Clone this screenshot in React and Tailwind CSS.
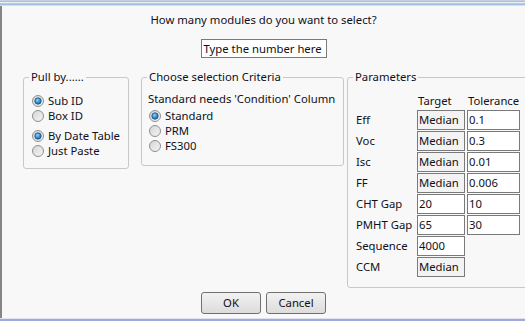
import React from 'react';

function Radio({ checked }) {
  return (
    <svg width="12" height="12" viewBox="0 0 12 12" className="shrink-0">
      <defs>
        <linearGradient id="rbg" x1="0" y1="0" x2="1" y2="1">
          <stop offset="0" stopColor="#d4d4d4" />
          <stop offset="1" stopColor="#f6f6f6" />
        </linearGradient>
        <radialGradient id="rdot" cx="0.4" cy="0.35" r="0.7">
          <stop offset="0" stopColor="#8fd3f7" />
          <stop offset="0.6" stopColor="#2b8ed0" />
          <stop offset="1" stopColor="#105d9c" />
        </radialGradient>
      </defs>
      <circle cx="6" cy="6" r="5.5" fill="url(#rbg)" stroke="#8e8f8f" strokeWidth="1" />
      {checked && <circle cx="6" cy="6" r="3.2" fill="url(#rdot)" stroke="#1f4f82" strokeWidth="0.8" />}
    </svg>
  );
}

function RadioRow({ label, checked, className = '' }) {
  return (
    <div className={`flex items-center h-[15px] ${className}`}>
      <Radio checked={checked} />
      <span className="ml-[4px] leading-[15px] whitespace-nowrap">{label}</span>
    </div>
  );
}

function Group({ title, className, children }) {
  return (
    <div className={`relative shrink-0 border border-[#c8c8c8] rounded-[3px] ${className}`}>
      <span className="absolute -top-[9px] left-[5px] px-[2px] leading-[16px] bg-[#f8f8f8] whitespace-nowrap">
        {title}
      </span>
      {children}
    </div>
  );
}

function Field({ value, readOnly }) {
  return (
    <div
      className={`h-[20px] border border-[#7a7a7a] pl-[1px] leading-[18px] ${readOnly ? 'bg-[#f3f3f3]' : 'bg-white'}`}
    >
      {value}
    </div>
  );
}

const params = [
  ['Eff', 'Median', '0.1'],
  ['Voc', 'Median', '0.3'],
  ['Isc', 'Median', '0.01'],
  ['FF', 'Median', '0.006'],
  ['CHT Gap', '20', '10'],
  ['PMHT Gap', '65', '30'],
  ['Sequence', '4000', null],
  ['CCM', 'Median', null],
];

export default function App() {
  return (
    <div
      className="w-[525px] h-[321px] overflow-hidden bg-[#f8f8f8] flex flex-col text-[11.3px] text-[#101018]"
      style={{ fontFamily: '"Noto Sans", "Open Sans", sans-serif' }}
    >
      <div className="h-[6px] flex flex-col shrink-0">
        <div className="h-[1px] bg-[#c3d1e3]" />
        <div className="h-[1px] bg-[#a9bedb]" />
        <div className="h-[1px] bg-[#eef3f9]" />
        <div className="h-[1px] bg-[#b3c8e3]" />
        <div className="h-[1px] bg-[#a6bfdf]" />
        <div className="h-[1px] bg-[#d3dfee]" />
      </div>
      <div className="flex-1 border-l-2 border-[#858585] flex flex-col">
        <div className="mt-[6px] text-center leading-[16px]">How many modules do you want to select?</div>
        <div className="mt-[11px] mx-auto w-[126px] h-[19px] border border-[#7a7a7a] bg-white pl-[2px] leading-[17px] whitespace-nowrap">
          Type the number here
        </div>
        <div className="mt-[19px] flex items-start">
          <Group title="Pull by......" className="ml-[21px] w-[106px] h-[92px] pl-[8px] pt-[15px]">
            <RadioRow label="Sub ID" checked className="h-[14px]" />
            <RadioRow label="Box ID" className="h-[14px]" />
            <RadioRow label="By Date Table" checked className="mt-[5px]" />
            <RadioRow label="Just Paste" />
          </Group>
          <Group title="Choose selection Criteria" className="ml-[12px] w-[203px] h-[89px] pl-[7px] pt-[13px]">
            <div className="leading-[16px] -ml-[1px] whitespace-nowrap">Standard needs 'Condition' Column</div>
            <RadioRow label="Standard" checked className="mt-[1px]" />
            <RadioRow label="PRM" />
            <RadioRow label="FS300" />
          </Group>
          <Group title="Parameters" className="ml-[3px] w-[182px] h-[211px] pl-[8px] pt-[15px]">
            <div className="grid grid-cols-[59px_48px_53px] gap-x-[2px] gap-y-[1px]">
              <div className="leading-[16px]" />
              <div className="leading-[16px] pl-[1px]">Target</div>
              <div className="leading-[16px] pl-[1px]">Tolerance</div>
              {params.map(([label, target, tol]) => (
                <React.Fragment key={label}>
                  <div className="h-[20px] leading-[20px] whitespace-nowrap">{label}</div>
                  <Field value={target} readOnly={target === 'Median'} />
                  {tol !== null ? <Field value={tol} /> : <div />}
                </React.Fragment>
              ))}
            </div>
          </Group>
        </div>
        <div className="mt-[4px] mx-auto flex gap-[5px]">
          <button className="w-[60px] h-[22px] border border-[#707070] rounded-[3px] bg-gradient-to-b from-[#f2f2f2] to-[#dcdcdc] leading-[20px]">
            OK
          </button>
          <button className="w-[60px] h-[22px] border border-[#707070] rounded-[3px] bg-gradient-to-b from-[#f2f2f2] to-[#dcdcdc] leading-[20px]">
            Cancel
          </button>
        </div>
      </div>
      <div className="h-[1px] bg-[#dfe3ef] shrink-0" />
      <div className="h-[2px] bg-[#9fa9dc] shrink-0" />
    </div>
  );
}
